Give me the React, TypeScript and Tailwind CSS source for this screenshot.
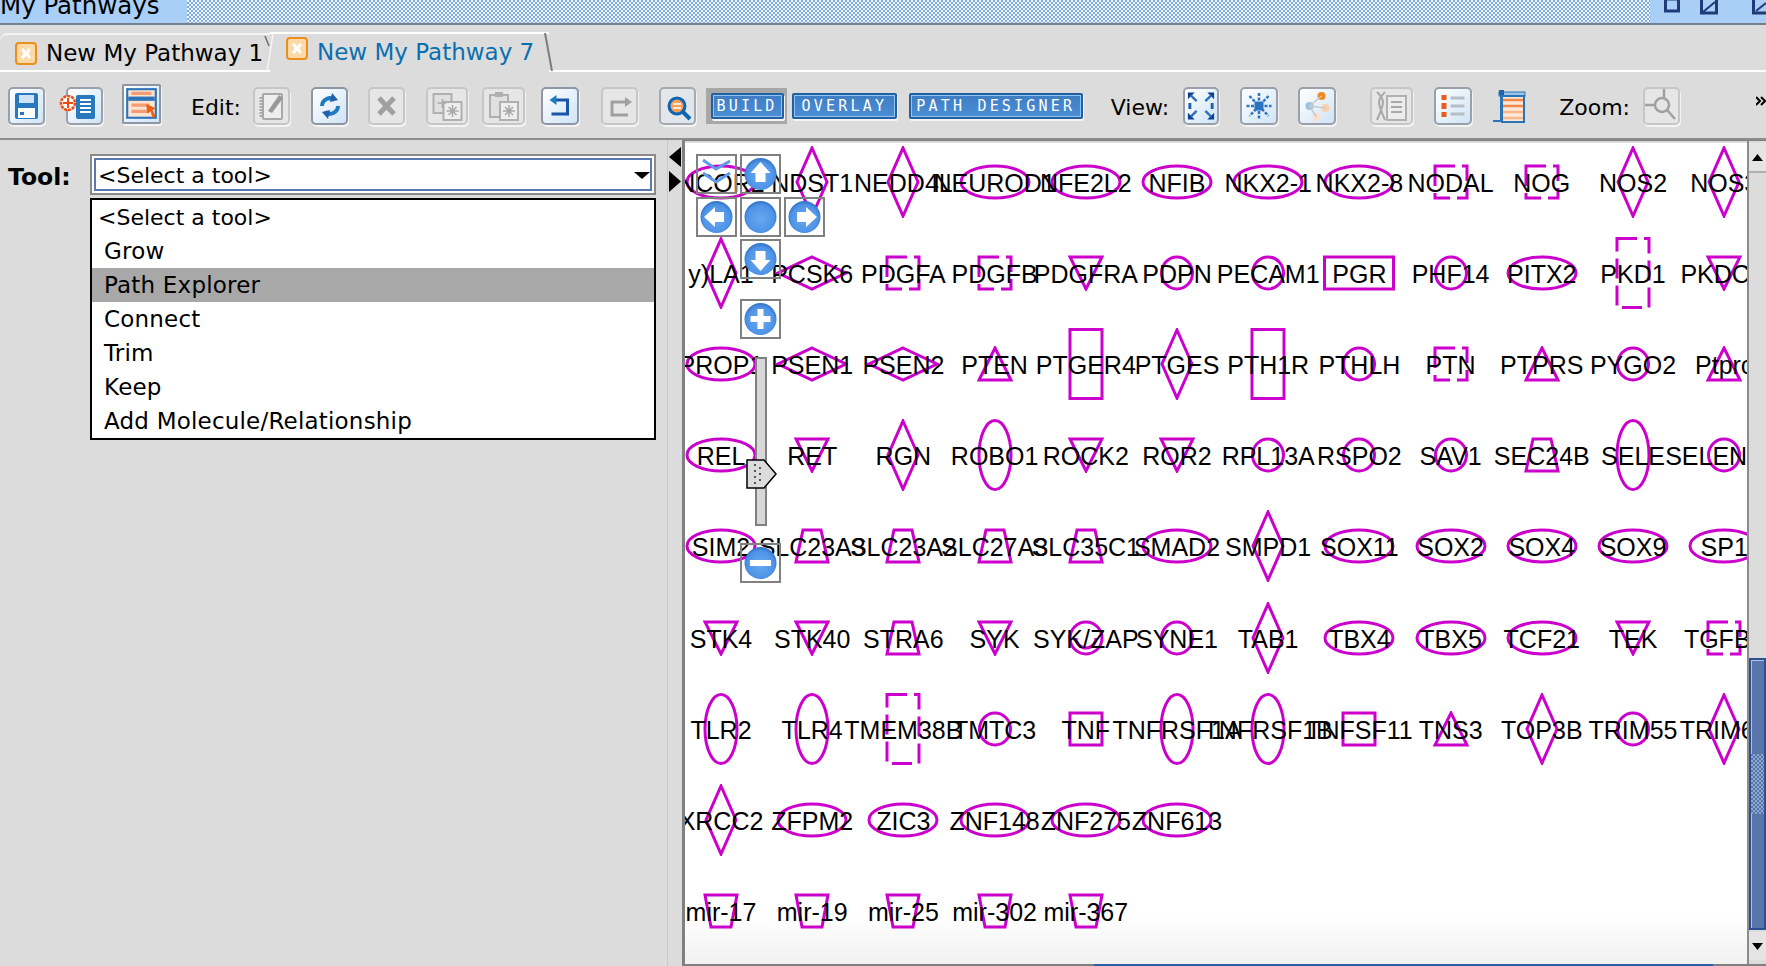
import React from 'react';

type ShapeKind = 'ell' | 'tell' | 'tdia' | 'wdia' | 'cir' | 'tri' | 'inv' | 'trap' | 'itrap' | 'rect' | 'trect' | 'sq' | 'dash' | 'tdash' | 'dbl';

// one row per y position in the diagram, one entry per column
const rows: [string, ShapeKind][][] = [
  [['NCOR2', 'ell'], ['NDST1', 'tdia'], ['NEDD4L', 'tdia'], ['NEUROD1', 'ell'], ['NFE2L2', 'ell'], ['NFIB', 'ell'], ['NKX2-1', 'ell'], ['NKX2-8', 'ell'], ['NODAL', 'dash'], ['NOG', 'dash'], ['NOS2', 'tdia'], ['NOS3', 'tdia']],
  [['y)LA1', 'tdia'], ['PCSK6', 'wdia'], ['PDGFA', 'dash'], ['PDGFB', 'dash'], ['PDGFRA', 'inv'], ['PDPN', 'cir'], ['PECAM1', 'cir'], ['PGR', 'rect'], ['PHF14', 'cir'], ['PITX2', 'ell'], ['PKD1', 'tdash'], ['PKDCC', 'inv']],
  [['PROP1', 'ell'], ['PSEN1', 'wdia'], ['PSEN2', 'wdia'], ['PTEN', 'tri'], ['PTGER4', 'trect'], ['PTGES', 'tdia'], ['PTH1R', 'trect'], ['PTHLH', 'cir'], ['PTN', 'dash'], ['PTPRS', 'tri'], ['PYGO2', 'cir'], ['Ptprc', 'tri']],
  [['REL', 'ell'], ['RET', 'inv'], ['RGN', 'tdia'], ['ROBO1', 'tell'], ['ROCK2', 'inv'], ['ROR2', 'inv'], ['RPL13A', 'cir'], ['RSPO2', 'cir'], ['SAV1', 'cir'], ['SEC24B', 'trap'], ['SELE', 'tell'], ['SELENOP', 'cir']],
  [['SIM2', 'ell'], ['SLC23A3', 'trap'], ['SLC23A2', 'trap'], ['SLC27A3', 'trap'], ['SLC35C1', 'trap'], ['SMAD2', 'ell'], ['SMPD1', 'tdia'], ['SOX11', 'ell'], ['SOX2', 'ell'], ['SOX4', 'ell'], ['SOX9', 'ell'], ['SP1', 'ell']],
  [['STK4', 'inv'], ['STK40', 'inv'], ['STRA6', 'trap'], ['SYK', 'inv'], ['SYK/ZAP', 'dbl'], ['SYNE1', 'cir'], ['TAB1', 'tdia'], ['TBX4', 'ell'], ['TBX5', 'ell'], ['TCF21', 'ell'], ['TEK', 'inv'], ['TGFB1', 'dash']],
  [['TLR2', 'tell'], ['TLR4', 'tell'], ['TMEM38B', 'tdash'], ['TMTC3', 'cir'], ['TNF', 'sq'], ['TNFRSF1A', 'tell'], ['TNFRSF1B', 'tell'], ['TNFSF11', 'sq'], ['TNS3', 'tri'], ['TOP3B', 'tdia'], ['TRIM55', 'cir'], ['TRIM63', 'tdia']],
  [['XRCC2', 'tdia'], ['ZFPM2', 'ell'], ['ZIC3', 'ell'], ['ZNF148', 'ell'], ['ZNF275', 'ell'], ['ZNF613', 'ell']],
  [['mir-17', 'itrap'], ['mir-19', 'itrap'], ['mir-25', 'itrap'], ['mir-302', 'itrap'], ['mir-367', 'itrap']],
];

const toolItems = ['Grow', 'Path Explorer', 'Connect', 'Trim', 'Keep', 'Add Molecule/Relationship'];

const NodeShape: React.FC<{ kind: ShapeKind }> = ({ kind }) => {
  const wide = kind === 'ell' || kind === 'wdia' || kind === 'rect';
  const tall = kind === 'tell' || kind === 'tdia' || kind === 'trect' || kind === 'tdash';
  const w = wide ? 72 : 36;
  const h = tall ? 72 : 36;
  const common = { fill: 'none', stroke: '#cc00cc', strokeWidth: 3 };
  let body: React.ReactNode = null;
  if (kind === 'ell') body = <ellipse cx="36" cy="18" rx="34" ry="16" {...common} />;
  if (kind === 'tell') body = <ellipse cx="18" cy="36" rx="16" ry="34.5" {...common} />;
  if (kind === 'cir') body = <ellipse cx="18" cy="18" rx="15.5" ry="16" {...common} />;
  if (kind === 'dbl') body = (
    <>
      <circle cx="18" cy="18" r="16" {...common} />
      <path d="M8 18a10 10 0 0 0 20 0" {...common} />
    </>
  );
  if (kind === 'tdia') body = <path d="M18 2L33 36L18 70L3 36Z" {...common} />;
  if (kind === 'wdia') body = <path d="M36 2L70 18L36 34L2 18Z" {...common} />;
  if (kind === 'tri') body = <path d="M18 2L34 34H2Z" {...common} />;
  if (kind === 'inv') body = <path d="M2 2H34L18 34Z" {...common} />;
  if (kind === 'trap') body = <path d="M9 2H27L34 34H2Z" {...common} />;
  if (kind === 'itrap') body = <path d="M2 2H34L28 34H8Z" {...common} />;
  if (kind === 'rect') body = <rect x="1.5" y="2" width="69" height="32" {...common} />;
  if (kind === 'trect') body = <rect x="2" y="1.5" width="32" height="69" {...common} />;
  if (kind === 'sq') body = <rect x="2" y="2" width="32" height="32" {...common} />;
  if (kind === 'dash') body = <rect x="2" y="2" width="32" height="32" {...common} strokeDasharray="20 7" />;
  if (kind === 'tdash') body = <rect x="2" y="1.5" width="32" height="69" {...common} strokeDasharray="20 7" />;
  return (
    <svg width={w} height={h} viewBox={`0 0 ${w} ${h}`} className="absolute left-0 top-0 -translate-x-1/2 -translate-y-1/2">
      {body}
    </svg>
  );
};

const IconFrame: React.FC<{ muted?: boolean; className?: string; children: React.ReactNode }> = ({ muted, className, children }) => (
  <div
    className={`h-[38px] w-[37px] shrink-0 overflow-hidden rounded-[5px] border-2 shadow-[1px_2px_0_#f4f4f4] ${
      muted ? 'border-[#c6c6c6] bg-[#e6e6e6]' : 'border-[#9aa0aa] bg-linear-to-br from-[#ffffff] to-[#cfe4f6]'
    } ${className ?? ''}`}
  >
    <svg viewBox="0 0 33 34" className="h-full w-full">
      {children}
    </svg>
  </div>
);

const PixelButton: React.FC<{ label: string; className: string }> = ({ label, className }) => (
  <div className={`flex h-[26px] items-center justify-center rounded-[2px] border-2 border-[#24609f] bg-linear-to-b from-[#3d7dc4] to-[#4c8ed6] font-['DejaVu_Sans_Mono',monospace] text-[15px] leading-none tracking-[3.2px] text-white shadow-[inset_0_0_0_1px_#8fc4f4,1px_2px_0_#f4f4f4] ${className}`}>
    {label}
  </div>
);

const TabIcon: React.FC<{ className?: string }> = ({ className }) => (
  <svg viewBox="0 0 22 23" className={`h-[23px] w-[22px] shrink-0 ${className ?? ''}`}>
    <rect x="1" y="1" width="20" height="21" rx="3" fill="#fbd9a8" stroke="#ec8e1c" strokeWidth="2" />
    <path d="M7 7l8 9M15 7l-8 9" stroke="#fff" strokeWidth="3" />
    <path d="M11 9v5M8 11.500h6" stroke="#fff" strokeWidth="2" />
  </svg>
);

const NavButton: React.FC<{ className?: string; children?: React.ReactNode }> = ({ className, children }) => (
  <div className={`h-[40px] w-[41px] border-2 border-[#808080] ${className ?? ''}`}>{children}</div>
);

const NavBall: React.FC<{ d?: string }> = ({ d }) => (
  <svg viewBox="0 0 37 36" className="h-full w-full">
    <defs>
      <radialGradient id="ball" cx="50%" cy="55%" r="55%">
        <stop offset="0%" stopColor="#6aa8f0" />
        <stop offset="75%" stopColor="#4f94e8" />
        <stop offset="100%" stopColor="#2f74c4" />
      </radialGradient>
    </defs>
    <circle cx="18.500" cy="18" r="16" fill="url(#ball)" />
    {d && <path d={d} fill="#fff" />}
  </svg>
);

const App: React.FC = () => {
  return (
    <div className="flex h-[966px] w-[1766px] flex-col overflow-hidden bg-[#dcdcdc] font-['DejaVu_Sans',sans-serif] text-black">
      {/* Title bar */}
      <div className="flex h-[25px] shrink-0 items-start overflow-hidden border-b-2 border-[#74808c] bg-[#a9cff7]">
        <span className="-mt-[7px] w-[187px] whitespace-nowrap text-[24.500px] leading-[26px]">My Pathways</span>
        <div className="h-[23px] w-[1463px] bg-[repeating-conic-gradient(#7fabe2_0_25%,#f0f6ff_0_50%)] bg-[length:4px_4px]" />
        <div className="ml-[14px] flex">
          <svg width="16" height="14" className="-mt-[1px]"><rect x="1.500" y="0" width="13" height="12" fill="none" stroke="#1f3a78" strokeWidth="3" /><path d="M12 0h4" stroke="#fff" strokeWidth="2" /></svg>
          <svg width="20" height="15" className="ml-[20px]"><rect x="1.500" y="-2" width="15" height="15" fill="none" stroke="#1f3a78" strokeWidth="3" /><path d="M3 12L15 2" stroke="#1f3a78" strokeWidth="2" /></svg>
          <svg width="14" height="15" className="ml-[32px]"><rect x="1.500" y="-2" width="20" height="15" fill="none" stroke="#1f3a78" strokeWidth="3" /><path d="M4 11L14 3" stroke="#1f3a78" strokeWidth="2" /></svg>
        </div>
      </div>

      {/* Tabs */}
      <div className="flex h-[47px] shrink-0 items-end border-b-2 border-white">
        <div className="relative flex h-[37px] w-[270px] items-center rounded-tl-[8px] border-t-2 border-[#f4f4f4] pl-[15px] pt-[2px]">
          <TabIcon />
          <span className="ml-[9px] whitespace-nowrap text-[23px] leading-none">New My Pathway 1</span>
          <svg width="6" height="12" className="absolute right-0 top-0"><path d="M1 1l4 10" stroke="#707070" strokeWidth="1.500" /></svg>
        </div>
        <div className="relative -mb-[2px] flex h-[40px] w-[279px] items-start border-t-2 border-white bg-[#dcdcdc] pl-[16px] pt-[3px]">
          <svg width="8" height="38" className="absolute -left-[4px] top-0"><path d="M7 0L1 38" stroke="#f4f4f4" strokeWidth="1.500" /></svg>
          <TabIcon />
          <span className="ml-[9px] mt-[3px] whitespace-nowrap text-[23px] leading-[24px] text-[#0a6fb0]">New My Pathway 7</span>
          <svg width="12" height="38" className="absolute -right-[6px] -top-[1px]"><path d="M2 0L9 38" stroke="#7c7c7c" strokeWidth="2" /></svg>
        </div>
      </div>

      {/* Toolbar */}
      <div className="flex h-[68px] shrink-0 items-center border-b-2 border-[#8c8c8c] pl-[8px] pt-[2px]">
        <IconFrame>
          <rect x="5" y="4" width="23" height="26" rx="2" fill="#2878bd" />
          <rect x="9" y="6" width="15" height="8" fill="#cfe3f5" />
          <rect x="8" y="19" width="17" height="10" fill="#fff" />
          <rect x="10" y="23" width="4" height="3" fill="#2878bd" />
        </IconFrame>
        <div className="relative ml-[21px]">
          <IconFrame>
            <rect x="8" y="6" width="19" height="24" rx="2" fill="#2878bd" />
            <path d="M12 11h11M12 15h11M12 19h11M12 23h11" stroke="#fff" strokeWidth="2" />
          </IconFrame>
          <svg width="18" height="20" className="absolute -left-[7px] top-[6px]">
            <circle cx="9" cy="10" r="7" fill="#fff" stroke="#ee4a12" strokeWidth="2.500" strokeDasharray="3 1" />
            <path d="M9 5v10M4 10h10" stroke="#ee4a12" strokeWidth="2" />
          </svg>
        </div>
        <IconFrame className="-mt-[4px] ml-[19px] !h-[40px] !w-[39px] !rounded-[2px] !border-[#8c96a4]">
          <rect x="3" y="3" width="27" height="27" fill="#fbe3d2" stroke="#2b74b8" strokeWidth="2" />
          <rect x="4" y="10" width="25" height="4" fill="#2b74b8" />
          <path d="M7 7h19M7 18h17M7 24h17" stroke="#f59d72" strokeWidth="3" />
          <path d="M21 17l9 4-3 2 3 6-3 1-2-6-3 2z" fill="#e8631a" />
        </IconFrame>
        <span className="ml-[30px] mt-[3px] text-[22px] leading-none">Edit:</span>
        <IconFrame muted className="ml-[12px]">
          <rect x="8" y="5" width="19" height="25" rx="1" fill="#eee" stroke="#a8a8a8" strokeWidth="2" />
          <path d="M6 8v20" stroke="#a8a8a8" strokeWidth="3" strokeDasharray="2 1" />
          <path d="M13 22L24 6l4 3-11 15z" fill="#999" />
        </IconFrame>
        <IconFrame className="ml-[21px] !border-[#8c96a4]">
          <path d="M9 17a8 8 0 0 1 13-6" fill="none" stroke="#1f7ac0" strokeWidth="4" />
          <path d="M25 17a8 8 0 0 1-13 6" fill="none" stroke="#1f7ac0" strokeWidth="4" />
          <path d="M19 4l6 7-8 2zM15 30l-6-7 8-2z" fill="#1f5fae" />
        </IconFrame>
        <IconFrame muted className="ml-[20px]">
          <path d="M9 9l15 16M24 9L9 25" stroke="#a0a0a0" strokeWidth="5" />
        </IconFrame>
        <IconFrame muted className="ml-[21px] !w-[42px]">
          <rect x="3" y="5" width="18" height="19" fill="#e0e0e0" stroke="#b0b0b0" strokeWidth="2" />
          <rect x="13" y="13" width="18" height="18" fill="#eee" stroke="#b0b0b0" strokeWidth="2" />
          <path d="M22 16v12M16 22h12M18 18l8 8M26 18l-8 8M12 10v9M7 14h9" stroke="#a8a8a8" strokeWidth="1.500" />
        </IconFrame>
        <IconFrame muted className="ml-[14px] !w-[43px]">
          <rect x="3" y="6" width="18" height="22" fill="#e0e0e0" stroke="#b0b0b0" strokeWidth="2" />
          <rect x="8" y="3" width="8" height="5" fill="#b0b0b0" />
          <rect x="13" y="13" width="18" height="18" fill="#eee" stroke="#b0b0b0" strokeWidth="2" />
          <path d="M22 16v12M16 22h12M18 18l8 8M26 18l-8 8" stroke="#a8a8a8" strokeWidth="1.500" />
        </IconFrame>
        <IconFrame className="ml-[16px] !w-[38px] !border-[#8c96a4]">
          <path d="M11 11h13v14H8" fill="none" stroke="#1557a8" strokeWidth="3" />
          <path d="M6 11l7-5v10z" fill="#1f7ac0" />
        </IconFrame>
        <IconFrame muted className="ml-[22px]">
          <path d="M24 13H9v13h16" fill="none" stroke="#a0a0a0" strokeWidth="3" />
          <path d="M29 13l-7-5v10z" fill="#a0a0a0" />
        </IconFrame>
        <IconFrame className="ml-[21px] !border-[#a6aab0] !from-[#e6e6e6] !to-[#dfe6ee]">
          <circle cx="16" cy="17" r="8" fill="#f6a05a" stroke="#0c66b2" strokeWidth="3" />
          <path d="M12 15h8M12 19h8" stroke="#fff" strokeWidth="1.500" />
          <path d="M22 23l7 7" stroke="#0c66b2" strokeWidth="4" />
        </IconFrame>

        {/* Mode buttons */}
        <div className="ml-[10px] flex h-[36px] w-[82px] items-center justify-center bg-[#a8a8a8] pl-[1px]">
          <PixelButton label="BUILD" className="w-[73px]" />
        </div>
        <PixelButton label="OVERLAY" className="ml-[5px] w-[106px]" />
        <PixelButton label="PATH DESIGNER" className="ml-[12px] w-[176px]" />

        <span className="ml-[28px] mt-[3px] text-[22px] leading-none">View:</span>
        <IconFrame className="ml-[14px] !w-[36px]">
          <path d="M3 10V3h7zM30 10V3h-7zM3 24v7h7zM30 24v7h-7z" fill="#0f3f94" />
          <path d="M6 6l6 6M27 6l-6 6M6 28l6-6M27 28l-6-6" stroke="#2b74c0" strokeWidth="2.500" />
          <path d="M5 14v6M28 14v6" stroke="#1c62b0" strokeWidth="3" />
        </IconFrame>
        <IconFrame className="ml-[21px] !w-[38px]">
          <rect x="12" y="12.500" width="9" height="9" fill="#2b74c0" />
          <path d="M16.500 4v26M4 17h25M7 7l19 20M26 7L7 27" stroke="#2b74c0" strokeWidth="2.500" strokeDasharray="3 1.500" />
        </IconFrame>
        <IconFrame className="ml-[20px] !w-[38px]">
          <circle cx="21" cy="7" r="4" fill="#f08a1e" />
          <circle cx="9" cy="17" r="4" fill="#9cc0e6" />
          <circle cx="25" cy="19" r="4" fill="#fcd0ac" />
          <circle cx="16" cy="28" r="4" fill="#fde0cc" />
          <path d="M9 17L21 7M9 17L25 19M9 17l7 11" stroke="#c8c8c8" strokeWidth="1.500" />
        </IconFrame>
        <IconFrame muted className="ml-[34px] !w-[43px]">
          <rect x="12" y="7" width="19" height="24" fill="#ececec" stroke="#b0b0b0" strokeWidth="2" />
          <path d="M16 13h11M16 18h11M16 23h11" stroke="#a8a8a8" strokeWidth="2" />
          <path d="M2 3c8 8 8 10 0 28M10 3C2 11 2 13 10 31" fill="none" stroke="#a8a8a8" strokeWidth="2" />
        </IconFrame>
        <IconFrame className="ml-[21px] !w-[38px]">
          <path d="M5 6h5v5H5zM5 14h5v6H5zM5 23h5v5H5z" fill="#ea5a1a" />
          <path d="M14 9h14M14 17h14M14 25h14" stroke="#b8bec6" strokeWidth="3" />
        </IconFrame>
        <svg viewBox="0 0 35 38" className="ml-[20px] h-[38px] w-[35px] shrink-0">
          <rect x="7" y="5" width="26" height="4" fill="#9ec3e6" stroke="#2b74b8" />
          <rect x="7" y="3" width="5" height="5" fill="#1f62ae" />
          <path d="M9 8v26H1" fill="none" stroke="#2b74b8" strokeWidth="2" />
          <rect x="10" y="9" width="22" height="26" fill="#fde8d8" stroke="#2b74b8" strokeWidth="2" />
          <path d="M11 13h20M11 19h20" stroke="#f2884a" strokeWidth="2.500" />
          <path d="M11 25h20M11 31h20" stroke="#f8b68c" strokeWidth="2.500" />
        </svg>
        <span className="ml-[32px] mt-[3px] text-[22px] leading-none">Zoom:</span>
        <IconFrame muted className="ml-[13px] !w-[37px]">
          <circle cx="17" cy="16" r="7" fill="none" stroke="#a0a0a0" strokeWidth="2.500" />
          <path d="M22 21l8 9M0 16h11M19 0v9" stroke="#a0a0a0" strokeWidth="2.500" />
        </IconFrame>
        <svg width="10" height="10" className="-mt-[10px] ml-[76px] shrink-0">
          <path d="M0 1l4 4-4 4M5 1l4 4-4 4" fill="none" stroke="#000" strokeWidth="2" />
        </svg>
      </div>

      {/* Work area */}
      <div className="flex min-h-0 flex-1">
        {/* Tool panel */}
        <div className="flex w-[668px] shrink-0 border-r border-[#c8c8c8]">
          <div className="w-[90px] shrink-0 pl-[8px] pt-[21px] text-[23.500px] font-bold leading-[32px]">Tool:</div>
          <div className="w-[566px] pt-[14px]">
            <div className="h-[41px] border-2 border-[#8a8a8a] bg-white p-[2px]">
              <div className="flex h-[33px] items-center justify-between border-2 border-[#5a79b0] pl-[2px] pt-[2px] text-[22px] leading-none">
                <span>&lt;Select a tool&gt;</span>
                <svg width="16" height="7"><path d="M0 0h16L8 7z" fill="#000" /></svg>
              </div>
            </div>
            <div className="mt-[3px] h-[242px] border-2 border-black bg-white text-[23px]">
              <div className="flex h-[34px] items-center pl-[6px] pt-[1px] text-[22px]">&lt;Select a tool&gt;</div>
              {toolItems.map((item) => (
                <div key={item} className={`flex h-[34px] items-center whitespace-nowrap pl-[12px] pt-[1px] tracking-[0.2px] ${item === 'Path Explorer' ? 'bg-[#a8a8a8]' : ''}`}>
                  {item}
                </div>
              ))}
            </div>
          </div>
        </div>

        {/* Splitter */}
        <div className="flex w-[14px] shrink-0 flex-col pl-[1px] pt-[7px]">
          <svg width="12" height="20"><path d="M12 0v20L0 10z" fill="#000" /></svg>
          <svg width="12" height="21" className="mt-[4px]"><path d="M0 0v21l12-10.500z" fill="#000" /></svg>
        </div>

        {/* Diagram */}
        <div className="flex min-w-0 flex-1 flex-col border-l-[3px] border-t-[1px] border-[#808080]">
          <div className="flex min-h-0 flex-1">
            <div className="relative mt-[2px] min-w-0 flex-1 overflow-hidden bg-linear-to-b from-white from-[94%] to-[#f1f1f1] font-['Liberation_Sans',Arial,sans-serif] text-[25px] leading-none">
              {rows.map((row, r) =>
                row.map(([label, kind], c) => (
                  <div key={label} className="absolute h-0 w-0" style={{ left: 36 + 91.2 * c, top: 39 + 91.1 * r }}>
                    <NodeShape kind={kind} />
                    <span className="absolute left-0 top-[1px] -translate-x-1/2 -translate-y-1/2 whitespace-nowrap">{label}</span>
                  </div>
                ))
              )}

              {/* Pan and zoom control */}
              <div className="absolute left-[11px] top-[11px] flex w-[129px] flex-col items-center">
                <div className="flex w-full gap-[3px]">
                  <NavButton>
                    <svg viewBox="0 0 37 36" className="h-full w-full">
                      <path d="M5 4l13 9 14-8M5 17l13 9 14-9" fill="none" stroke="#5f9ce8" strokeWidth="3" />
                    </svg>
                  </NavButton>
                  <NavButton>
                    <NavBall d="M18.500 6l10 11h-5v9h-10v-9h-5z" />
                  </NavButton>
                </div>
                <div className="mt-[3px] flex w-full gap-[3px]">
                  <NavButton>
                    <NavBall d="M6 18l11-10v5h9v10h-9v5z" />
                  </NavButton>
                  <NavButton>
                    <NavBall />
                  </NavButton>
                  <NavButton>
                    <NavBall d="M31 18L20 8v5h-9v10h9v5z" />
                  </NavButton>
                </div>
                <NavButton className="mt-[2px]">
                  <NavBall d="M18.500 30l10-11h-5v-9h-10v9h-5z" />
                </NavButton>
                <NavButton className="mt-[20px]">
                  <NavBall d="M15.500 8h6v7h7v6h-7v7h-6v-7h-7v-6h7z" />
                </NavButton>
                <div className="relative mt-[18px] h-[169px] w-[12px] border-2 border-[#808080] bg-[#d8d8d8]">
                  <svg width="32" height="30" className="absolute -left-[11px] top-[100px]">
                    <path d="M1 1h17l12 14-12 14H1z" fill="#dcdcdc" stroke="#000" strokeWidth="1.500" />
                    <path d="M8 6h2M13 9h2M8 12h2M13 15h2M8 18h2M13 21h2M8 24h2" stroke="#555" strokeWidth="2" />
                  </svg>
                </div>
                <NavButton className="mt-[17px]">
                  <NavBall d="M8 15h21v6H8z" />
                </NavButton>
              </div>
            </div>

            {/* Vertical scrollbar */}
            <div className="flex w-[19px] shrink-0 flex-col border-l-2 border-[#8c8c8c] bg-[#dcdcdc]">
              <div className="mt-[2px] flex h-[30px] items-center justify-center border-b-2 border-[#b0b0b0] bg-[#e4e4e4]">
                <svg width="11" height="7"><path d="M5.500 0L11 7H0z" fill="#000" /></svg>
              </div>
              <div className="flex-1" />
              <div className="flex h-[272px] items-center justify-center border-2 border-[#2b4f90] bg-[#5874aa] shadow-[inset_1px_1px_0_#a8c4ec]">
                <div className="-mt-[20px] h-[60px] w-[14px] bg-[repeating-conic-gradient(#8fa8d0_0_25%,#5874aa_0_50%)] bg-[length:4px_4px]" />
              </div>
              <div className="mt-[2px] flex h-[28px] items-center justify-center bg-[#e4e4e4]">
                <svg width="11" height="7"><path d="M0 0h11L5.500 7z" fill="#000" /></svg>
              </div>
              <div className="h-[4px]" />
            </div>
          </div>
          {/* Horizontal scrollbar edge */}
          <div className="flex h-[2px] shrink-0 bg-[#808080]">
            <div className="ml-[409px] w-[619px] bg-[#2b5fa8]" />
          </div>
        </div>
      </div>
    </div>
  );
};

export default App;
